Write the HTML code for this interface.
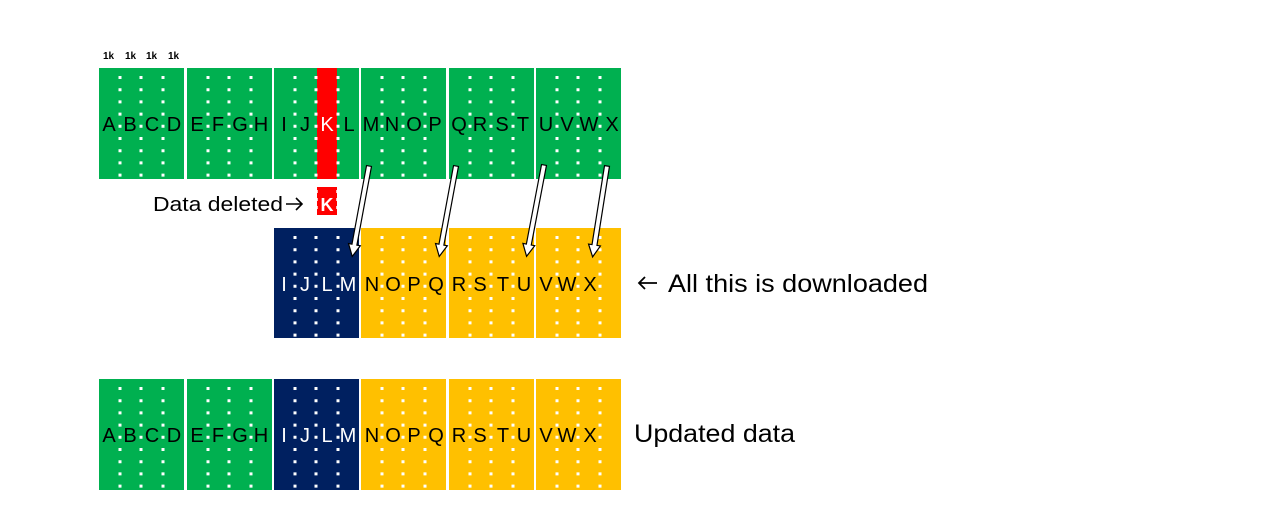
<!DOCTYPE html>
<html><head><meta charset="utf-8"><style>
html,body{margin:0;padding:0;background:#fff;width:1280px;height:510px;overflow:hidden}
svg{display:block}
text{font-family:"Liberation Sans","DejaVu Sans",sans-serif}
</style></head><body>
<svg width="1280" height="510" viewBox="0 0 1280 510" xmlns="http://www.w3.org/2000/svg">
<defs>
<g id="dots1">
</g>
</defs>
<!-- 1k labels -->
<g font-size="10" font-weight="bold" fill="#000">
<text x="103" y="59">1k</text><text x="125" y="59">1k</text><text x="146" y="59">1k</text><text x="168" y="59">1k</text>
</g>
<!-- Row 1 -->
<g fill="#00b050">
<rect x="99" y="68" width="85" height="111"/>
<rect x="187" y="68" width="85" height="111"/>
<rect x="274" y="68" width="85" height="111"/>
<rect x="361" y="68" width="85" height="111"/>
<rect x="449" y="68" width="85" height="111"/>
<rect x="536" y="68" width="85" height="111"/>
</g>
<rect x="317" y="68" width="20" height="111" fill="#ff0000"/>
<!-- Row 2 -->
<rect x="274" y="228" width="85" height="110" fill="#002060"/>
<g fill="#ffc000">
<rect x="361" y="228" width="85" height="110"/>
<rect x="449" y="228" width="85" height="110"/>
<rect x="536" y="228" width="85" height="110"/>
</g>
<!-- Row 3 -->
<g fill="#00b050">
<rect x="99" y="379" width="85" height="111"/>
<rect x="187" y="379" width="85" height="111"/>
</g>
<rect x="274" y="379" width="85" height="111" fill="#002060"/>
<g fill="#ffc000">
<rect x="361" y="379" width="85" height="111"/>
<rect x="449" y="379" width="85" height="111"/>
<rect x="536" y="379" width="85" height="111"/>
</g>
<!-- dots -->
<g stroke="#fff" stroke-width="3" stroke-dasharray="3 9.2">
<!-- row1 -->
<path d="M120 76V178M141 76V178M163 76V178 M208 76V178M229 76V178M251 76V178 M295 76V178M316 76V178M338 76V178 M382 76V178M403 76V178M425 76V178 M470 76V178M491 76V178M513 76V178 M557 76V178M578 76V178M600 76V178"/>
<!-- row2 -->
<path d="M295 236V338M316 236V338M338 236V338 M382 236V338M403 236V338M425 236V338 M470 236V338M491 236V338M513 236V338 M557 236V338M578 236V338M600 236V338"/>
<!-- row3 -->
<path d="M120 387V489M141 387V489M163 387V489 M208 387V489M229 387V489M251 387V489 M295 387V489M316 387V489M338 387V489 M382 387V489M403 387V489M425 387V489 M470 387V489M491 387V489M513 387V489 M557 387V489M578 387V489M600 387V489"/>
</g>
<!-- deleted K -->
<rect x="317" y="187" width="20" height="28" fill="#ff0000"/>
<path d="M317 190V213M337 190V213" stroke="#fff" stroke-width="1.5" stroke-dasharray="3 5"/>
<text x="327" y="211" font-size="18" font-weight="bold" fill="#fff" text-anchor="middle">K</text>
<!-- letters -->
<g font-size="20" text-anchor="middle" fill="#000">
<text x="109" y="131">A</text><text x="130" y="131">B</text><text x="152" y="131">C</text><text x="174" y="131">D</text>
<text x="197" y="131">E</text><text x="218" y="131">F</text><text x="240" y="131">G</text><text x="261" y="131">H</text>
<text x="284" y="131">I</text><text x="305" y="131">J</text><text x="327" y="131" fill="#fff">K</text><text x="349" y="131">L</text>
<text x="371" y="131">M</text><text x="392" y="131">N</text><text x="414" y="131">O</text><text x="435" y="131">P</text>
<text x="459" y="131">Q</text><text x="480" y="131">R</text><text x="502" y="131">S</text><text x="523" y="131">T</text>
<text x="546" y="131">U</text><text x="567" y="131">V</text><text x="589" y="131">W</text><text x="612" y="131">X</text>

<text x="284" y="291" fill="#fff">I</text><text x="305" y="291" fill="#fff">J</text><text x="327" y="291" fill="#fff">L</text><text x="348" y="291" fill="#fff">M</text>
<text x="372" y="291">N</text><text x="393" y="291">O</text><text x="414" y="291">P</text><text x="436" y="291">Q</text>
<text x="459" y="291">R</text><text x="480" y="291">S</text><text x="503" y="291">T</text><text x="524" y="291">U</text>
<text x="546" y="291">V</text><text x="567" y="291">W</text><text x="590" y="291">X</text>

<text x="109" y="442">A</text><text x="130" y="442">B</text><text x="152" y="442">C</text><text x="174" y="442">D</text>
<text x="197" y="442">E</text><text x="218" y="442">F</text><text x="240" y="442">G</text><text x="261" y="442">H</text>
<text x="284" y="442" fill="#fff">I</text><text x="305" y="442" fill="#fff">J</text><text x="327" y="442" fill="#fff">L</text><text x="348" y="442" fill="#fff">M</text>
<text x="372" y="442">N</text><text x="393" y="442">O</text><text x="414" y="442">P</text><text x="436" y="442">Q</text>
<text x="459" y="442">R</text><text x="480" y="442">S</text><text x="503" y="442">T</text><text x="524" y="442">U</text>
<text x="546" y="442">V</text><text x="567" y="442">W</text><text x="590" y="442">X</text>
</g>
<!-- arrows -->
<g fill="#fff" stroke="#000" stroke-width="1.2" stroke-linejoin="miter">
<g transform="translate(369,166) rotate(10.5)"><path d="M-2.5 0H2.5V80H6L0 92L-6 80H-2.5Z"/></g>
<g transform="translate(456,166) rotate(10.5)"><path d="M-2.5 0H2.5V80H6L0 92L-6 80H-2.5Z"/></g>
<g transform="translate(544,165) rotate(10.8)"><path d="M-2.5 0H2.5V81H6L0 93L-6 81H-2.5Z"/></g>
<g transform="translate(607,166) rotate(9)"><path d="M-2.5 0H2.5V80H6L0 92L-6 80H-2.5Z"/></g>
</g>
<!-- labels -->
<text x="153" y="211" font-size="20" fill="#000" textLength="130" lengthAdjust="spacingAndGlyphs">Data deleted</text>
<path d="M286 204H302M296 198L302 204L296 210" stroke="#000" stroke-width="1.6" fill="none"/>
<path d="M657 283H639M645 277L639 283L645 289" stroke="#000" stroke-width="1.8" fill="none"/>
<text x="668" y="292" font-size="25" fill="#000" textLength="260" lengthAdjust="spacingAndGlyphs">All this is downloaded</text>
<text x="634" y="442" font-size="25" fill="#000" textLength="161" lengthAdjust="spacingAndGlyphs">Updated data</text>
</svg>
</body></html>
